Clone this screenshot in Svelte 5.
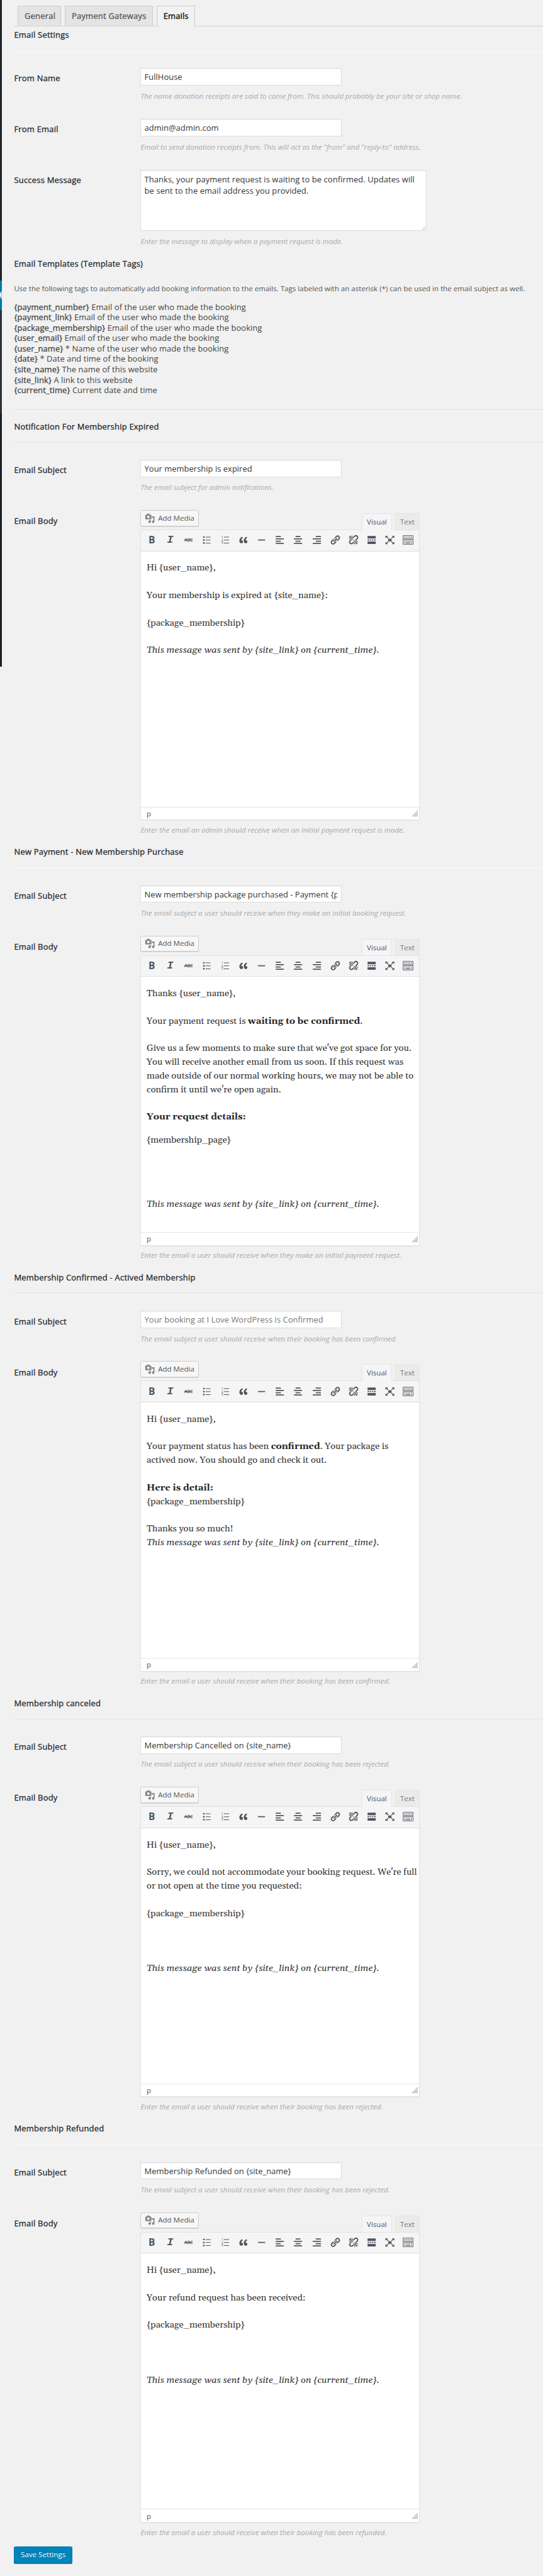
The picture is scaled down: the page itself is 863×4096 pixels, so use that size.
<script>
  const templateTags = [
    ['{payment_number}', 'Email of the user who made the booking'],
    ['{payment_link}', 'Email of the user who made the booking'],
    ['{package_membership}', 'Email of the user who made the booking'],
    ['{user_email}', 'Email of the user who made the booking'],
    ['{user_name}', '* Name of the user who made the booking'],
    ['{date}', '* Date and time of the booking'],
    ['{site_name}', 'The name of this website'],
    ['{site_link}', 'A link to this website'],
    ['{current_time}', 'Current date and time']
  ];

  const signature = { i: 'This message was sent by {site_link} on {current_time}.' };

  // A line is a list of runs; a number is an empty stretch measured in lines.
  const sections = [
    {
      title: 'Notification For Membership Expired',
      subject: 'Your membership is expired',
      subjectHelp: 'The email subject for admin notifications.',
      body: [['Hi {user_name},'], 1, ['Your membership is expired at {site_name}:'], 1, ['{package_membership}'], 1, [signature]],
      bodyHelp: 'Enter the email an admin should receive when an initial payment request is made.'
    },
    {
      title: 'New Payment - New Membership Purchase',
      subject: 'New membership package purchased - Payment {payment_number}',
      subjectHelp: 'The email subject a user should receive when they make an initial booking request.',
      body: [
        ['Thanks {user_name},'], 1,
        ['Your payment request is ', { b: 'waiting to be confirmed' }, '.'], 1,
        ["Give us a few moments to make sure that we've got space for you."],
        ['You will receive another email from us soon. If this request was'],
        ['made outside of our normal working hours, we may not be able to'],
        ["confirm it until we're open again."], 1,
        [{ b: 'Your request details:' }], 0.67,
        ['{membership_page}'], 3.68,
        [signature]
      ],
      bodyHelp: 'Enter the email a user should receive when they make an initial payment request.'
    },
    {
      title: 'Membership Confirmed - Actived Membership',
      placeholder: 'Your booking at I Love WordPress is Confirmed',
      subjectHelp: 'The email subject a user should receive when their booking has been confirmed.',
      body: [
        ['Hi {user_name},'], 1,
        ['Your payment status has been ', { b: 'confirmed' }, '. Your package is'],
        ['actived now. You should go and check it out.'], 1,
        [{ b: 'Here is detail:' }],
        ['{package_membership}'], 1,
        ['Thanks you so much!'],
        [signature]
      ],
      bodyHelp: 'Enter the email a user should receive when their booking has been confirmed.'
    },
    {
      title: 'Membership canceled',
      subject: 'Membership Cancelled on {site_name}',
      subjectHelp: 'The email subject a user should receive when their booking has been rejected.',
      body: [
        ['Hi {user_name},'], 1,
        ["Sorry, we could not accommodate your booking request. We're full"],
        ['or not open at the time you requested:'], 1,
        ['{package_membership}'], 3,
        [signature]
      ],
      bodyHelp: 'Enter the email a user should receive when their booking has been rejected.'
    },
    {
      title: 'Membership Refunded',
      subject: 'Membership Refunded on {site_name}',
      subjectHelp: 'The email subject a user should receive when their booking has been rejected.',
      body: [['Hi {user_name},'], 1, ['Your refund request has been received:'], 1, ['{package_membership}'], 3, [signature]],
      bodyHelp: 'Enter the email a user should receive when their booking has been refunded.'
    }
  ];

  const tools = ['bold', 'italic', 'strike', 'ul', 'ol', 'quote', 'hr', 'left', 'center', 'right', 'link', 'unlink', 'more', 'full', 'kitchen'];

  const shapes = {
    ul: 'M3.2 3.1h2.8v2.8H3.2zM3.2 8.7h2.8v2.8H3.2zM3.2 14.3h2.8v2.8H3.2zM8 4h9v1.2H8zM8 9.5h9v1.2H8zM8 15h9v1.2H8z',
    quote:
      'M9.49 13.22c0-.74-.2-1.38-.61-1.9-.62-.78-1.83-.88-2.53-.72-.29-1.65 1.11-3.75 2.92-4.65L7.88 4c-2.73 1.3-5.42 4.28-4.96 8.05C3.21 14.43 4.59 16 6.54 16c.85 0 1.56-.25 2.12-.75s.83-1.18.83-2.03zm8.05 0c0-.74-.2-1.38-.61-1.9-.63-.78-1.83-.88-2.53-.72-.29-1.65 1.11-3.75 2.92-4.65L15.93 4c-2.73 1.3-5.41 4.28-4.95 8.05.29 2.38 1.66 3.95 3.61 3.95.85 0 1.56-.25 2.12-.75s.83-1.18.83-2.03z',
    hr: 'M3.6 9h13v2h-13z',
    left: 'M2.5 2.6h9.5v2H2.5zM2.5 6.9h15v2h-15zM2.5 11.2h9.5v2H2.5zM2.5 15.5h15v2h-15z',
    center: 'M5.5 2.6h9v2h-9zM2.5 6.9h15v2h-15zM5.5 11.2h9v2h-9zM2.5 15.5h15v2h-15z',
    right: 'M8 2.6h9.5v2H8zM2.5 6.9h15v2h-15zM8 11.2h9.5v2H8zM2.5 15.5h15v2h-15z',
    link: 'M17.74 2.76c1.68 1.69 1.68 4.41 0 6.1l-1.53 1.52c-1.12 1.12-2.7 1.47-4.14 1.09l2.62-2.61.76-.77.76-.76c.84-.84.84-2.2 0-3.04-.84-.85-2.2-.85-3.04 0l-.77.76-3.38 3.38c-.37-1.44-.02-3.02 1.1-4.14l1.52-1.53c1.69-1.68 4.42-1.68 6.1 0zM8.59 13.43l5.34-5.34c.42-.42.42-1.1 0-1.52-.44-.43-1.13-.39-1.53 0l-5.33 5.34c-.42.42-.42 1.1 0 1.52.44.43 1.13.39 1.52 0zm-.76 2.29l4.14-4.15c.38 1.44.03 3.02-1.09 4.14l-1.52 1.53c-1.69 1.68-4.41 1.68-6.1 0-1.68-1.68-1.68-4.42 0-6.1l1.53-1.52c1.12-1.12 2.7-1.47 4.14-1.1l-4.14 4.15c-.85.84-.85 2.2 0 3.05.84.84 2.2.84 3.04 0z',
    unlink:
      'M17.74 2.26c1.68 1.69 1.68 4.41 0 6.1l-1.53 1.52c-.32.33-.69.58-1.08.77L13 10l1.69-1.64.76-.77.76-.76c.84-.84.84-2.2 0-3.04-.84-.85-2.2-.85-3.04 0l-.77.76-.76.76L10 7l-.65-2.14c.19-.38.44-.75.77-1.07l1.52-1.53c1.69-1.68 4.42-1.68 6.1 0zM2 4l8 6-6-8zm4-2l4 8-2-8H6zM2 6l8 4-8-2V6zm7.36 7.69L10 13l.74 2.35-1.38 1.39c-1.69 1.68-4.41 1.68-6.1 0-1.68-1.68-1.68-4.42 0-6.1l1.39-1.38L7 10l-.69.64-1.52 1.53c-.85.84-.85 2.2 0 3.04.84.85 2.2.85 3.04 0zM18 16l-8-6 6 8zm-4 2l-4-8 2 8h2zm4-4l-8-4 8 2v2z',
    more: 'M2.5 2.6h15v4.6h-15zM2.5 9h3.4v2H2.5zM7.2 9h2.2v2H7.2zM10.7 9h2.2v2h-2.2zM14.2 9h3.3v2h-3.3zM2.5 12.8h15v4.7h-15z',
    full: 'M7 7.7h6v4.7H7zM1.8 2.4h4.6L4.9 3.9l3 2.7-1.1 1.1-3-2.8-1.5 1.6-.5-.4zM18.2 2.4v4.2l-1.9-1.7-3 2.8-1.1-1.1 3-2.7-1.4-1.5zM1.8 17.6v-4.3l1.9 1.7 3-2.8 1.2 1.1-3 2.7 1.4 1.6zM18.2 17.6h-4.5l1.5-1.6-3-2.7 1.1-1.1 3 2.8 1.9-1.7z'
  };
</script>

{#snippet run(r)}{#if r.b}<strong>{r.b}</strong>{:else if r.i}<em>{r.i}</em>{:else}{r}{/if}{/snippet}

{#snippet grip(n)}
  <svg class="grip" viewBox="0 0 12 12">
    {#each Array(n) as _, c}
      {#each Array(c + 1) as _, k}
        <rect x={11 - (n - 1 - c) * 2.2 - 1.1} y={10.4 - k * 2.2} width="1.2" height="1.2" />
      {/each}
    {/each}
  </svg>
{/snippet}

{#snippet tool(name)}
  <span class="tool">
    {#if name === 'bold'}
      <b class="t-bold">B</b>
    {:else if name === 'italic'}
      <i class="t-italic">I</i>
    {:else if name === 'strike'}
      <s class="t-strike">ABC</s>
    {:else if name === 'ol'}
      <svg viewBox="0 0 20 20">
        <path d="M8 4h9.5v1.2H8zM8 9.5h9.5v1.2H8zM8 15h9.5v1.2H8z" />
        <text x="3.2" y="6.6">1</text><text x="3.2" y="12.2">2</text><text x="3.2" y="17.8">3</text>
      </svg>
    {:else if name === 'kitchen'}
      <svg viewBox="0 0 20 20" class="kitchen">
        <path class="box" d="M.8 1.9h18.4v6H.8zM.8 9.6h18.4v8.2H.8z" />
        <path class="keys" d="M3 4.9h14.4M3 12.3h14.4" />
        <path d="M2.8 14.4h1.8V16H2.8zM5.8 14.4h8v1.6h-8zM15.2 14.4H17V16h-1.8z" />
      </svg>
    {:else}
      <svg viewBox="0 0 20 20"><path fill-rule={name === 'link' ? 'nonzero' : 'evenodd'} d={shapes[name]} /></svg>
    {/if}
  </span>
{/snippet}

<div class="page">
  <aside class="rail">
    <div class="seg top"></div>
    <div class="seg current"><svg viewBox="0 0 3 54" preserveAspectRatio="none"><path d="M3 19L0 24v5l3 6z" /></svg></div>
    <div class="seg sub"></div>
    <div class="seg rest"></div>
  </aside>

  <main>
    <nav class="tabs">
      <a class="tab general">General</a>
      <a class="tab gateways">Payment Gateways</a>
      <a class="tab active">Emails</a>
    </nav>

    <h3 class="first">Email Settings</h3>
    <hr />

    <div class="row">
      <label class="name" for="from-name">From Name</label>
      <div class="field">
        <input id="from-name" value="FullHouse" />
        <p class="help">The name donation receipts are said to come from. This should probably be your site or shop name.</p>
      </div>
    </div>
    <div class="row">
      <label class="name" for="from-email">From Email</label>
      <div class="field">
        <input id="from-email" value="admin@admin.com" />
        <p class="help">Email to send donation receipts from. This will act as the "from" and "reply-to" address.</p>
      </div>
    </div>
    <div class="row message">
      <span class="name">Success Message</span>
      <div class="field">
        <div class="textarea">
          Thanks, your payment request is waiting to be confirmed. Updates will<br />be sent to the email address you provided.
          {@render grip(3)}
        </div>
        <p class="help">Enter the message to display when a payment request is made.</p>
      </div>
    </div>

    <h3 class="templates">Email Templates (Template Tags)</h3>
    <p class="intro">Use the following tags to automatically add booking information to the emails. Tags labeled with an asterisk (*) can be used in the email subject as well.</p>
    <ul class="tags">
      {#each templateTags as [tag, text]}
        <li><b>{tag}</b> {text}</li>
      {/each}
    </ul>
    <hr />

    {#each sections as s, n}
      <h3 class:after-list={n === 0} class:after-editor={n > 0}>{s.title}</h3>
      <section>
        <hr />
        <div class="row subject">
          <label class="name" for="subject-{n}">Email Subject</label>
          <div class="field">
            <input id="subject-{n}" value={s.subject ?? ''} placeholder={s.placeholder ?? ''} />
            <p class="help">{s.subjectHelp}</p>
          </div>
        </div>
        <div class="row body">
          <span class="name">Email Body</span>
          <div class="field">
            <div class="bar">
              <button class="media">
                <svg viewBox="0 0 20 20"><path fill-rule="evenodd" d="M13 11V4c0-.55-.45-1-1-1h-1.67L9 1H5L3.67 3H2c-.55 0-1 .45-1 1v7c0 .55.45 1 1 1h10c.55 0 1-.45 1-1zM7 4.5c1.38 0 2.5 1.12 2.5 2.5S8.38 9.5 7 9.5 4.5 8.38 4.5 7 5.62 4.5 7 4.5zM14 6h5v10.5c0 1.38-1.12 2.5-2.5 2.5S14 17.88 14 16.5s1.12-2.5 2.5-2.5c.17 0 .34.02.5.05V9h-3V6zm-4 8.05V13h2v3.5c0 1.38-1.12 2.5-2.5 2.5S7 17.88 7 16.5 8.12 14 9.5 14c.17 0 .34.02.5.05z" /></svg>
                Add Media
              </button>
              <span class="mode visual">Visual</span>
              <span class="mode">Text</span>
            </div>
            <div class="editor">
              <div class="toolbar">
                {#each tools as t}{@render tool(t)}{/each}
              </div>
              <div class="content">
                {#each s.body as line}
                  {#if typeof line === 'number'}
                    <div style="height: {line * 25.3}px"></div>
                  {:else}
                    <div class="line">{#each line as r}{@render run(r)}{/each}</div>
                  {/if}
                {/each}
              </div>
              <div class="status"><span>p</span>{@render grip(5)}</div>
            </div>
            <p class="help">{s.bodyHelp}</p>
          </div>
        </div>
      </section>
    {/each}

    <button class="save">Save Settings</button>
  </main>
</div>

<style>
  :global(html), :global(body) { background: #f1f1f1; overflow: hidden; }
  :global(body) { margin: 0; }
  .page {
    zoom: 0.8627;
    width: 1001px;
    height: 4748px;
    display: flex;
    align-items: flex-start;
    overflow: hidden;
    font-family: 'Open Sans', sans-serif;
    font-size: 15px;
    line-height: 20px;
    color: #444;
    background: #f1f1f1;
  }
  .page, .page * { box-sizing: border-box; }
  .rail { width: 3px; flex: none; }
  .seg { width: 3px; }
  .seg.top { height: 517px; background: #1d2327; }
  .seg.current { height: 54px; background: #0077ad; }
  .seg.current svg { display: block; width: 3px; height: 54px; fill: #f1f1f1; }
  .seg.sub { height: 191px; background: #2c3136; }
  .seg.rest { height: 467px; background: #1a2026; }

  main { flex: 1; padding-left: 23px; min-width: 0; white-space: nowrap; }
  h3, p, ul { margin: 0; padding: 0; font-size: 15px; line-height: 20px; }
  h3, .name, .tab, .tags b { font-weight: 400; letter-spacing: 0.27px; -webkit-text-stroke: 0.35px currentColor; }
  h3, .name { color: #23282d; }
  hr { margin: 0; border: 0; height: 2px; background: linear-gradient(#dcdcdc 50%, #fafafa 50%); }

  .tabs { display: flex; align-items: flex-end; height: 49px; padding-left: 7px; border-bottom: 2px solid #d2d2d2; }
  .tab {
    height: 37px; margin-right: 7px; padding: 0 11px; border: 1px solid #ccc; border-top-width: 2px; border-bottom: 0;
    background: #e4e4e4; color: #555; line-height: 37px;
  }
  .general { width: 80px; }
  .gateways { width: 162px; }
  .tab.active { width: 70px; height: 39px; margin-bottom: -2px; background: #f1f1f1; color: #000; letter-spacing: 0.15px; }

  .first { margin-top: 5px; height: 39.5px; }
  .row { display: grid; grid-template-columns: 233px 1fr; height: 94px; }
  .name { padding-top: 39px; }
  .field { padding-top: 30px; }
  .message { height: 179px; }
  .message .field { padding-top: 29.5px; }
  input {
    display: block; width: 370px; height: 32px; margin: 0; padding: 0 6px; border: 1px solid #ddd; border-radius: 0;
    background: #fff; box-shadow: inset 0 1px 2px rgba(0, 0, 0, 0.07); font: 15px/20px 'Open Sans', sans-serif;
    letter-spacing: 0.03px; color: #32373c; outline: 0;
  }
  input::placeholder { color: #777; opacity: 1; }
  .textarea {
    position: relative; width: 527px; height: 113px; padding: 6px 6px; border: 1px solid #ddd; background: #fff;
    box-shadow: inset 0 1px 2px rgba(0, 0, 0, 0.07); color: #32373c; line-height: 21px; letter-spacing: 0.1px;
  }
  .textarea .grip { position: absolute; right: 1px; bottom: 1px; fill: #aaa; }
  .grip { width: 12px; height: 12px; fill: #6d6072; }
  .help { margin-top: 9px; font-size: 13.45px; font-style: italic; color: #aaa; }

  .templates { margin-top: 14.5px; }
  .intro { margin-top: 25px; font-size: 13.42px; color: #555; }
  .tags { list-style: none; margin-top: 14px; height: 198.5px; }
  .tags li { line-height: 19.2px; letter-spacing: 0.07px; }
  .tags b { letter-spacing: 0.17px; }

  .after-list { height: 58.5px; padding-top: 20px; }
  .after-editor { height: 58.4px; padding-top: 19.5px; }
  section { height: 726px; }
  .row.subject { height: 123px; }
  .subject .name { padding-top: 40px; }
  .subject .field { padding-top: 30.5px; }
  .row.body { height: 600px; }
  .body .name { padding-top: 11px; }
  .body .field { padding-top: 0; }
  .bar { display: flex; align-items: flex-end; width: 514.5px; height: 36px; }
  .media {
    display: flex; align-items: center; gap: 5px; width: 107.5px; height: 30px; margin: 0 auto 6px 0; padding: 0 7px;
    border: 1px solid #ccc; border-radius: 3px; background: #f7f7f7; box-shadow: 0 1px 0 #ccc;
    font: 13.4px/28px 'Open Sans', sans-serif; color: #555;
  }
  .media svg { width: 19px; height: 19px; fill: #82878c; flex: none; }
  .mode {
    width: 46px; height: 30px; border: 1px solid #e5e5e5; border-bottom: 0; background: #ebebeb; color: #777;
    font-size: 13.4px; line-height: 29px; text-align: center;
  }
  .mode.visual { position: relative; width: 55.5px; height: 31px; margin: 0 5.5px -1px 0; background: #f5f5f5; color: #555; }
  .editor { width: 514.5px; height: 536px; display: flex; flex-direction: column; border: 1px solid #e2e2e2; background: #fff; box-shadow: 0 1px 1px rgba(0, 0, 0, 0.04); }
  .toolbar { display: flex; align-items: center; height: 39px; padding-left: 2.6px; border-bottom: 1px solid #ddd; background: #f5f5f5; color: #50575e; }
  .tool { width: 33.75px; height: 20px; display: flex; align-items: center; justify-content: center; margin-top: -1px; }
  .tool svg { width: 20px; height: 20px; fill: #50555f; }
  .tool text { font: 400 6px 'Open Sans', sans-serif; }
  .t-bold { font-size: 18px; font-weight: 700; }
  .t-italic { font: italic 700 20px 'Liberation Mono', monospace; }
  .t-strike { font-size: 9px; font-weight: 600; letter-spacing: -0.7px; }
  .kitchen .box { fill: none; stroke: #50555f; stroke-width: 1.1; }
  .kitchen .keys { fill: none; stroke: #50555f; stroke-width: 1.6; stroke-dasharray: 1.6 1.5; }
  .content { flex: 1; padding: 18.5px 10px 0; font-family: Gelasio, Georgia, serif; font-size: 17px; color: #333; }
  .line { height: 25.3px; line-height: 25.3px; }
  .line strong { color: #222; }
  .status { display: flex; align-items: center; justify-content: space-between; height: 24px; padding: 0 2px 0 10px; border-top: 1px solid #e5e5e5; font-size: 13.4px; color: #555; }
  .editor + .help { margin-top: 7.5px; }

  .save {
    display: block; width: 107px; height: 31px; margin-top: 15px; padding: 0; border: 1px solid #0073aa; border-radius: 3px;
    background: #0085ba; box-shadow: 0 1px 0 #006799; text-shadow: 0 -1px 1px #006799;
    font: 13.5px/28px 'Open Sans', sans-serif; color: #fff;
  }
</style>
